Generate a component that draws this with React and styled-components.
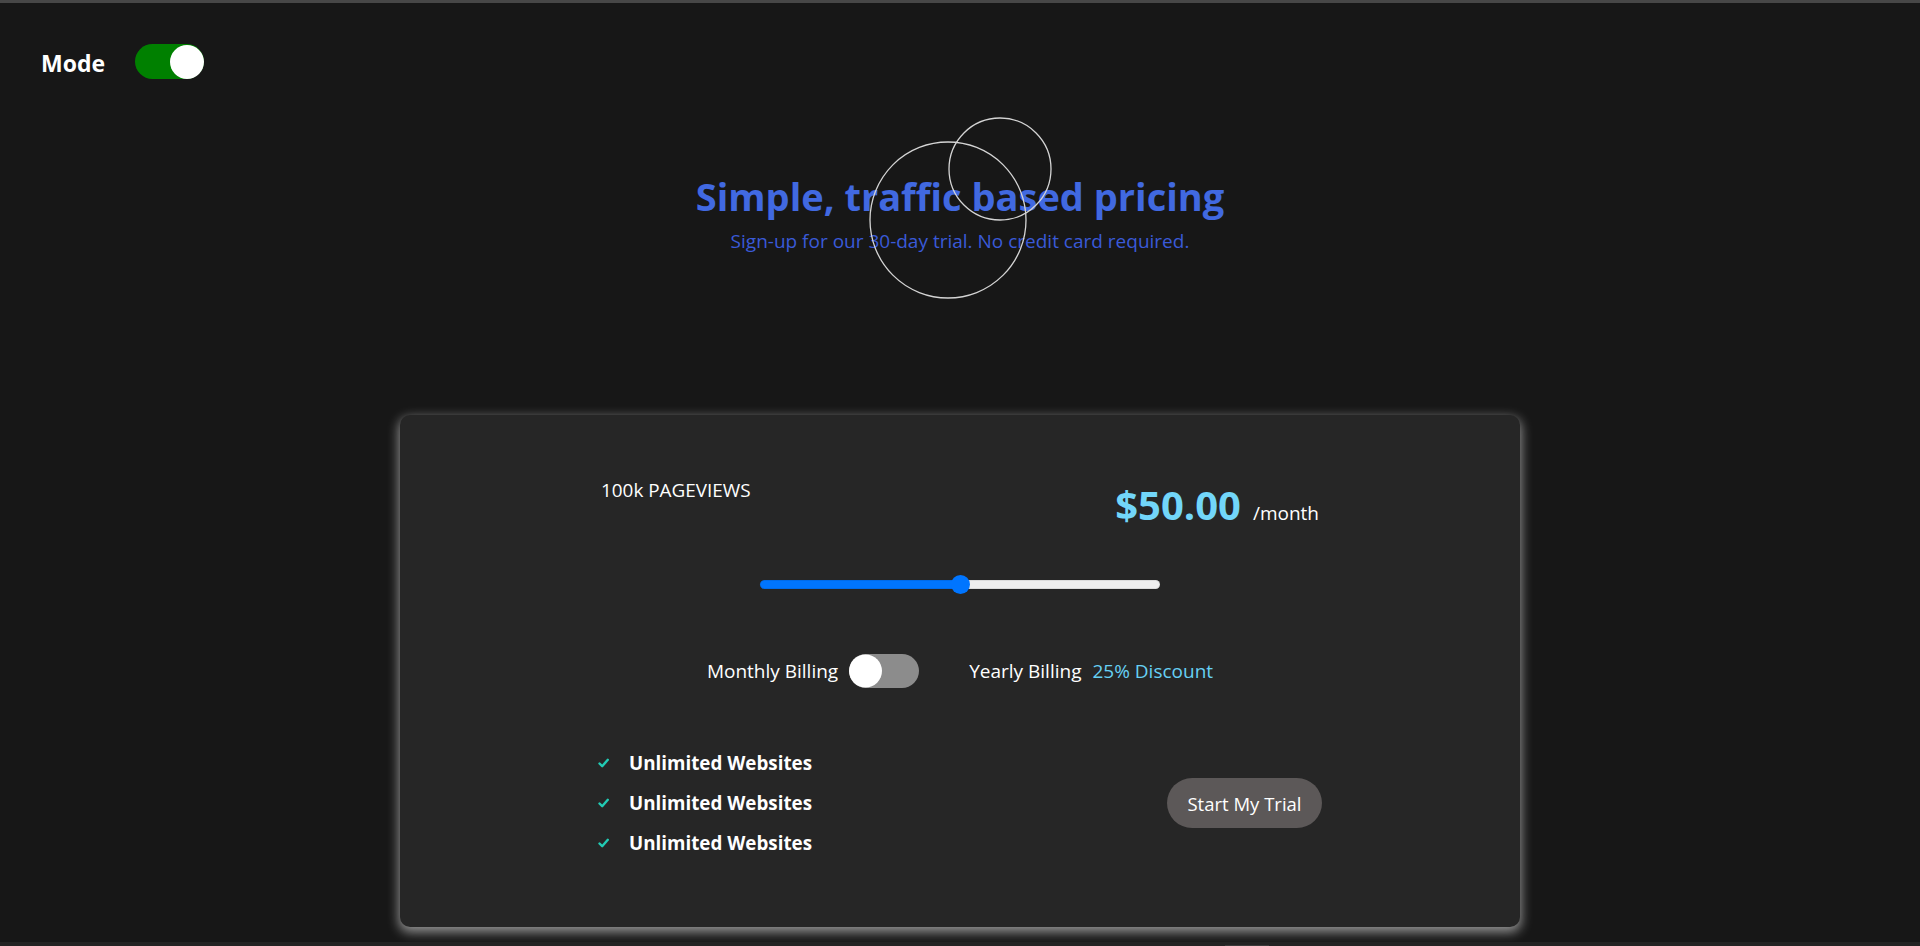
import React, { useState } from "react";
import styled, { createGlobalStyle } from "styled-components";

const FONT = `"Open Sans", "Noto Sans", sans-serif`;

const GlobalStyle = createGlobalStyle`
  html, body { margin: 0; padding: 0; background: #171717; }
  body { font-family: ${FONT}; color: #fff; overflow: hidden; }
  * { box-sizing: border-box; }
`;

const Page = styled.div`
  min-height: 100vh;
  border-top: 3px solid #474747;
  display: flex;
  flex-direction: column;
`;

const TopBar = styled.div`
  display: flex;
  align-items: center;
  gap: 30px;
  margin-top: 41px;
  padding-left: 41px;
  height: 35px;
`;

const ModeLabel = styled.span`
  font-size: 23px;
  font-weight: 700;
  margin-top: 2px;
`;

const Track = styled.button`
  position: relative;
  width: ${(p) => p.$w}px;
  height: ${(p) => p.$h}px;
  border-radius: ${(p) => p.$h / 2}px;
  border: none;
  padding: 0;
  background: ${(p) => p.$bg};
  cursor: pointer;
  flex: none;
`;

const Knob = styled.span`
  position: absolute;
  top: 50%;
  transform: translateY(-50%);
  ${(p) => (p.$on ? "right: 0;" : "left: 0;")}
  width: ${(p) => p.$size}px;
  height: ${(p) => p.$size}px;
  border-radius: 50%;
  background: #fff;
`;

function Switch({ on, w, h, bg, onToggle }) {
  return (
    <Track $w={w} $h={h} $bg={bg} onClick={onToggle} aria-pressed={on}>
      <Knob $on={on} $size={h - 1} />
    </Track>
  );
}

const Hero = styled.header`
  position: relative;
  margin-top: 91px;
  display: flex;
  flex-direction: column;
  align-items: center;
  gap: 6px;
`;

const Title = styled.h1`
  margin: 0;
  font-size: 38px;
  line-height: 53px;
  font-weight: 700;
  color: #4169e1;
`;

const Subtitle = styled.p`
  margin: 0;
  font-size: 19px;
  line-height: 24px;
  color: #3a5ad8;
`;

const Ring = styled.svg`
  position: absolute;
  left: calc(50% + ${(p) => p.$cx - p.$r - 1}px);
  top: ${(p) => p.$cy - p.$r - 1}px;
  pointer-events: none;
  overflow: visible;
`;

function Circle({ cx, cy, r }) {
  return (
    <Ring $cx={cx} $cy={cy} $r={r} width={r * 2 + 2} height={r * 2 + 2}>
      <circle cx={r + 1} cy={r + 1} r={r} fill="none" stroke="#d4d4d4" strokeWidth="1.3" />
    </Ring>
  );
}

const Card = styled.section`
  width: 1120px;
  margin: 162px auto 0;
  background: #262626;
  border-radius: 10px;
  box-shadow: 0 4px 12px 1px rgba(255, 255, 255, 0.55);
  padding: 62px 0 64px;
`;

const Inner = styled.div`
  width: 724px;
  margin: 0 auto;
  display: flex;
  flex-direction: column;
`;

const HeaderRow = styled.div`
  display: flex;
  justify-content: space-between;
  align-items: flex-start;
  height: 56px;
  padding: 0 3px;
`;

const Views = styled.span`
  font-size: 18.9px;
  line-height: 26px;
`;

const PriceBox = styled.div`
  display: flex;
  align-items: baseline;
  gap: 12px;
  margin-top: 3px;
`;

const Price = styled.span`
  font-size: 40px;
  line-height: 50px;
  font-weight: 700;
  color: #72d6f9;
`;

const Per = styled.span`
  font-size: 19px;
`;

const Range = styled.input`
  -webkit-appearance: none;
  appearance: none;
  display: block;
  width: 400px;
  height: 20px;
  margin: 41px auto 0;
  background: transparent;
  cursor: pointer;
  &::-webkit-slider-runnable-track {
    height: 9px;
    border-radius: 5px;
    background: linear-gradient(
      to right,
      #0075ff 0,
      #0075ff var(--fill),
      #efefef var(--fill),
      #efefef 100%
    );
    box-shadow: inset 0 0 0 1px rgba(0, 0, 0, 0.08);
  }
  &::-webkit-slider-thumb {
    -webkit-appearance: none;
    width: 19px;
    height: 19px;
    margin-top: -5px;
    border-radius: 50%;
    background: #0075ff;
    border: none;
  }
`;

const BillingRow = styled.div`
  display: flex;
  align-items: center;
  justify-content: center;
  height: 34px;
  margin-top: 60px;
`;

const BillText = styled.span`
  font-size: 19px;
  color: ${(p) => (p.$accent ? "#66d0f4" : "#fff")};
  margin-left: ${(p) => p.$ml || 0}px;
  margin-right: ${(p) => p.$mr || 0}px;
`;

const Bottom = styled.div`
  display: flex;
  justify-content: space-between;
  align-items: center;
  margin-top: 55px;
`;

const Features = styled.ul`
  list-style: none;
  margin: 0;
  padding: 0;
`;

const Feature = styled.li`
  display: flex;
  align-items: center;
  height: 40px;
  gap: 20px;
  font-size: 18.8px;
  font-weight: 700;
`;

const Check = styled.svg`
  flex: none;
  width: 11px;
  height: 10px;
`;

const Trial = styled.button`
  height: 50px;
  width: 155px;
  border: none;
  border-radius: 25px;
  background: #5c5858;
  color: #fff;
  font-family: ${FONT};
  font-size: 18.5px;
  cursor: pointer;
`;

const Footer = styled.div`
  margin-top: 15px;
  height: 6px;
  background: #232323;
  display: flex;
  padding-left: 1225px;
`;

const FooterTab = styled.span`
  width: 44px;
  height: 3px;
  margin-top: 3px;
  background: #3a3a3a;
`;

export default function App() {
  const [dark, setDark] = useState(true);
  const [yearly, setYearly] = useState(false);
  const [views, setViews] = useState(50);
  return (
    <>
      <GlobalStyle />
      <Page>
        <TopBar>
          <ModeLabel>Mode</ModeLabel>
          <Switch on={dark} w={69} h={35} bg="#008000" onToggle={() => setDark(!dark)} />
        </TopBar>
        <Hero>
          <Title>Simple, traffic based pricing</Title>
          <Subtitle>Sign-up for our 30-day trial. No credit card required.</Subtitle>
          <Circle cx={-12} cy={50} r={78} />
          <Circle cx={40} cy={-1} r={51} />
        </Hero>
        <Card>
          <Inner>
            <HeaderRow>
              <Views>100k PAGEVIEWS</Views>
              <PriceBox>
                <Price>$50.00</Price>
                <Per>/month</Per>
              </PriceBox>
            </HeaderRow>
            <Range
              type="range"
              min="0"
              max="100"
              value={views}
              onChange={(e) => setViews(Number(e.target.value))}
              style={{ "--fill": `${views}%` }}
            />
            <BillingRow>
              <BillText $mr={11}>Monthly Billing</BillText>
              <Switch on={yearly} w={70} h={34} bg="#8c8c8c" onToggle={() => setYearly(!yearly)} />
              <BillText $ml={50}>Yearly Billing</BillText>
              <BillText $accent $ml={11}>25% Discount</BillText>
            </BillingRow>
            <Bottom>
              <Features>
                {[0, 1, 2].map((i) => (
                  <Feature key={i}>
                    <Check viewBox="0 0 11 10">
                      <path d="M1.5 5.5 L4.2 8.2 L9.8 1.8" fill="none" stroke="#22cbb4" strokeWidth="2.4" strokeLinecap="round" strokeLinejoin="round" />
                    </Check>
                    Unlimited Websites
                  </Feature>
                ))}
              </Features>
              <Trial>Start My Trial</Trial>
            </Bottom>
          </Inner>
        </Card>
        <Footer>
          <FooterTab />
        </Footer>
      </Page>
    </>
  );
}
